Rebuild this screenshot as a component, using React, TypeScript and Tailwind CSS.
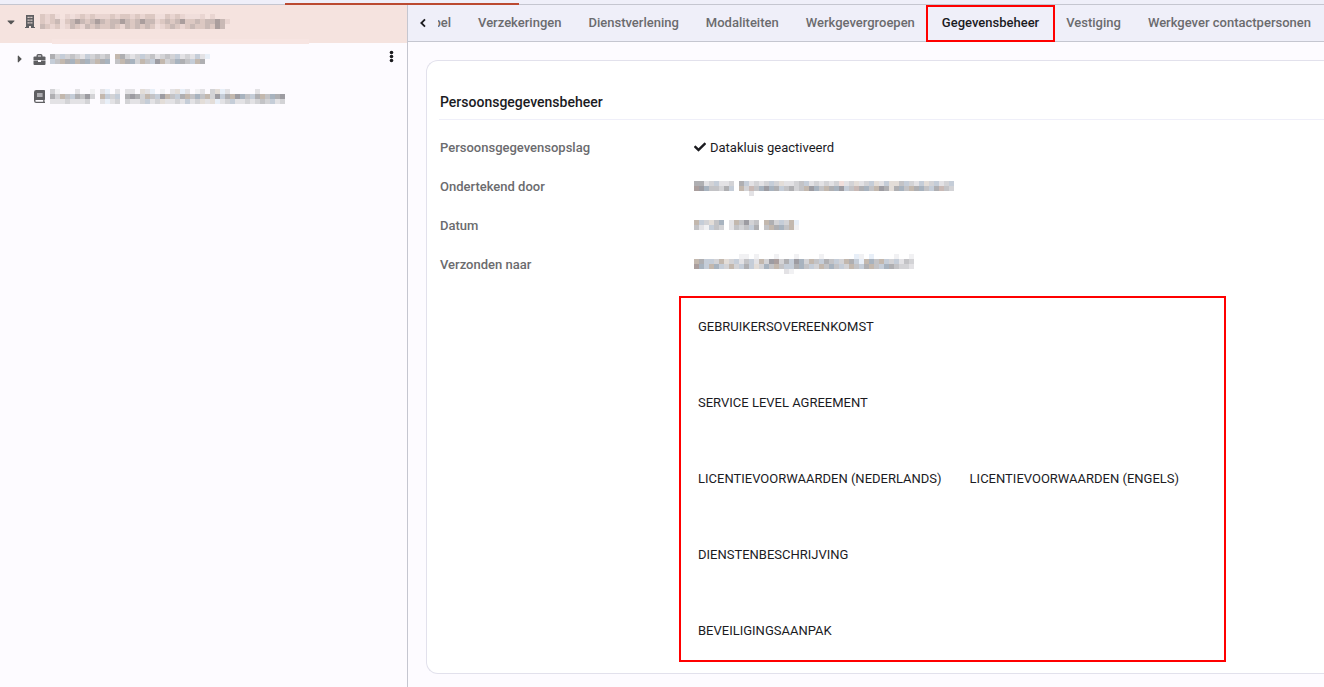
import type { ReactNode } from "react";
import { FaCaretDown, FaCaretRight, FaCheck } from "react-icons/fa";

// Shades for the masked text blocks
const shades: Record<string, string> = {
  "0": "#f1f1f3",
  "1": "#e3e2e5",
  "2": "#d3d3d6",
  "3": "#c3c3c6",
  "4": "#afafb2",
  "5": "#9d9ca2",
  w: "#c3b8ae",
  v: "#e3ddd8",
  c: "#a8b3bf",
  d: "#c5cdd8",
  b: "#e8eff8",
  p: "#f0dedb",
  t: "#e9d5d1",
  q: "#dcc8c2",
  r: "#c9b9b5",
  s: "#aa9e9d",
};

const BLOCK = 5;

// Masked value, drawn as a mosaic of square blocks
const Masked = ({ rows, label }: { rows: string[]; label: string }) => {
  const width = Math.max(...rows.map((row) => row.length)) * BLOCK;
  return (
    <svg
      width={width}
      height={rows.length * BLOCK}
      shapeRendering="crispEdges"
      role="img"
      aria-label={label}
      className="shrink-0"
    >
      {rows.map((row, y) =>
        row.split("").map((cell, x) =>
          shades[cell] ? (
            <rect
              key={`${x}-${y}`}
              x={x * BLOCK}
              y={y * BLOCK}
              width={BLOCK}
              height={BLOCK}
              fill={shades[cell]}
            />
          ) : null
        )
      )}
    </svg>
  );
};

const BuildingIcon = () => (
  <svg width="11" height="13" viewBox="0 0 11 13" className="mr-1 shrink-0 text-[#5f5f62]" aria-hidden="true">
    <path
      fill="currentColor"
      fillRule="evenodd"
      d="M1 0h8v12h1v1H6V11H4v2H0v-1h1zM2.6 1.8v1.2h1.2V1.8zm1.8 0v1.2h1.2V1.8zm1.8 0v1.2h1.2V1.8zM2.6 4.5v1.2h1.2V4.5zm1.8 0v1.2h1.2V4.5zm1.8 0v1.2h1.2V4.5zM2.6 7.2v1.2h1.2V7.2zm1.8 0v1.2h1.2V7.2zm1.8 0v1.2h1.2V7.2z"
    />
  </svg>
);

const BriefcaseIcon = () => (
  <svg width="13" height="11" viewBox="0 0 13 11" className="mr-1 shrink-0 text-[#5f5f62]" aria-hidden="true">
    <path d="M4.2 3V1.6q0-.9.9-.9h2.8q.9 0 .9.9V3" fill="none" stroke="currentColor" strokeWidth="1.4" />
    <path fill="currentColor" d="M1.6 2.5h9.8q1.1 0 1.1 1.1V6H.5V3.6q0-1.1 1.1-1.1z" />
    <path
      fill="currentColor"
      d="M.5 6.6H5v1.3h3V6.6h4.5V10q0 1-1 1h-10q-1 0-1-1z"
    />
  </svg>
);

const BookIcon = () => (
  <svg width="11" height="13" viewBox="0 0 11 13" className="mr-[5px] shrink-0 text-[#5f5f62]" aria-hidden="true">
    <path
      fill="currentColor"
      fillRule="evenodd"
      d="M2.2 0h8q.8 0 .8.8v8.4q0 .5-.5.8v1.7h.5V13H2.2Q0 13 0 10.8V2.2Q0 0 2.2 0zM3 3.6v1h5.6v-1zm0 2v.8h5.6v-.8zM2.2 10q-.9 0-.9.8t.9.9h7V10z"
    />
  </svg>
);

const MoreIcon = () => (
  <svg width="5" height="13" viewBox="0 0 5 13" fill="currentColor" aria-hidden="true">
    <circle cx="2.5" cy="2.5" r="1.8" />
    <circle cx="2.5" cy="6.5" r="1.8" />
    <circle cx="2.5" cy="10.5" r="1.8" />
  </svg>
);

const ChevronIcon = () => (
  <svg width="8" height="10" viewBox="0 0 8 10" fill="none" aria-hidden="true">
    <path d="M6 1.3 2.3 5 6 8.7" stroke="currentColor" strokeWidth="1.8" />
  </svg>
);

const tabs = [
  "bel",
  "Verzekeringen",
  "Dienstverlening",
  "Modaliteiten",
  "Werkgevergroepen",
  "Gegevensbeheer",
  "Vestiging",
  "Werkgever contactpersonen",
];

const documents = [
  ["Gebruikersovereenkomst"],
  ["Service Level Agreement"],
  ["Licentievoorwaarden (Nederlands)", "Licentievoorwaarden (Engels)"],
  ["Dienstenbeschrijving"],
  ["Beveiligingsaanpak"],
];

const Sidebar = () => (
  <aside className="w-[408px] shrink-0 border-r border-[#c5c6d0]">
    <ul>
      <li className="flex h-[38px] items-center bg-[#f5e3df] pb-[5px] pl-[5px]">
        <button aria-label="Inklappen" className="flex w-5 text-[#555]">
          <FaCaretDown size={12} />
        </button>
        <BuildingIcon />
        <Masked
          label="Werkgever"
          rows={[
            "qtqp tptqtqtttqtqqtqtqqppqtqtpppt t   ",
            "qtqrpqrsrqrsrqrrsrqrsrrtqrqrsqqrqrrsrt",
            "rqtqptrqtrqrqqrqtrqrqrqptqrqtqrqqrqsr ",
          ]}
        />
      </li>
      <li className="relative flex h-[37px] items-center pb-[5px] pl-[14px]">
        <span className="absolute -top-1 left-[52px] h-[5px] w-[257px] bg-[#f7e5e2]" />
        <button aria-label="Uitklappen" className="flex w-[19px] text-[#555]">
          <FaCaretRight size={12} />
        </button>
        <BriefcaseIcon />
        <Masked
          label="Afdeling"
          rows={["42d2321d2323 w4212d231232d121d1b", "d3w4cw4c3w4c 3w4c2w3d5w23c43dw4 "]}
        />
        <button aria-label="Meer opties" className="mr-[13px] ml-auto pb-1.5 text-[#1b1b1f]">
          <MoreIcon />
        </button>
      </li>
      <li className="flex h-[37px] items-center pb-[5px] pl-[34px]">
        <BookIcon />
        <Masked
          label="Dossier"
          rows={[
            "20   1  0 1b 1 11 v1b 0 1vb1 01 2vb1     1     ",
            "42w3d4352 wd2d 4542w3d5w3d4w3c3w25d4w5c3d4w3c45",
            "11121112  1b12 2112d12v1121d12v1vb12d1121232d12",
          ]}
        />
      </li>
    </ul>
  </aside>
);

const TabBar = () => (
  <div className="flex h-[37px] border-b border-[#c5c6d0] bg-[#efeff9]">
    <button
      aria-label="Vorige"
      className="flex w-[30px] shrink-0 items-center justify-center text-[#1b1b1f]"
    >
      <ChevronIcon />
    </button>
    <nav className="-mb-px flex min-w-0 flex-1 justify-end gap-px overflow-hidden">
      {tabs.map((tab) => {
        const active = tab === "Gegevensbeheer";
        return (
          <button
            key={tab}
            className={`relative shrink-0 px-[13px] pb-0.5 font-medium whitespace-nowrap ${
              active ? "text-[#1b1b1f]" : "text-[#6b6b6e]"
            }`}
          >
            {tab}
            {active && <span className="absolute -inset-x-[3px] inset-y-0 border-2 border-[#ff0000]" />}
          </button>
        );
      })}
    </nav>
  </div>
);

const Row = ({ label, children }: { label: string; children: ReactNode }) => (
  <div className="flex items-start py-[9px] leading-[21px]">
    <dt className="w-[254px] shrink-0 font-medium text-[#6b6b6e]">{label}</dt>
    <dd className="flex h-[21px] items-start">{children}</dd>
  </div>
);

const App = () => {
  return (
    <div className="flex min-h-screen flex-col bg-[#fdfbff] font-[Roboto,sans-serif] text-[13px] text-[#1b1b1f]">
      <div className="flex h-[5px] items-end border-b border-[#c5c6d0] bg-[#efeff9]">
        <span className="-mb-px ml-[285px] h-[2px] w-[234px] bg-[#bb4a31]" />
      </div>

      <div className="flex flex-1">
        <Sidebar />
        <main className="flex min-w-0 flex-1 flex-col">
          <TabBar />
          <section className="mt-[18px] mb-[13px] ml-[18px] flex-1 rounded-l-xl border border-r-0 border-[#e2e1ec] bg-white pl-3">
            <h2 className="border-b border-[#efeff9] pt-[31px] pb-[7px] pl-px text-sm font-medium">
              Persoonsgegevensbeheer
            </h2>

            <dl className="pt-2 pl-px">
              <Row label="Persoonsgegevensopslag">
                <FaCheck size={12} className="mt-1 mr-1" />
                Datakluis geactiveerd
              </Row>
              <Row label="Ondertekend door">
                <Masked
                  label="Naam"
                  rows={[
                    "",
                    "4412d112 4d1212d2v1123d121212p12v12dv1dvv3d21dv2d12d",
                    "s5c3324d w2r3c5c4d3423w5c3w4c5d3r4c3w54v4c3w4c3d4r32",
                    "           1",
                  ]}
                />
              </Row>
              <Row label="Datum">
                <Masked label="Datum" rows={["", "wd2v3c 1w3523 w42d2wb", "310d32 1323d4 3w4c3w0"]} />
              </Row>
              <Row label="Verzonden naar">
                <Masked
                  label="E-mailadres"
                  rows={[
                    "         00 0   0   0    0      b0 b    0  0",
                    "w4dd2wv2d13d1w25s24d5c2w3d43d2w4dbwc3wd2d132",
                    "scdwcd2w2d4dv2c3w3dd4c3d2w3c3d2w3d4w3dc43221",
                    "                  10",
                  ]}
                />
              </Row>
            </dl>

            <div className="mt-3 ml-[240px] flex w-[547px] max-w-full flex-col gap-10 border-2 border-[#ff0000] py-[11px] pl-[5px]">
              {documents.map((group) => (
                <div key={group[0]} className="flex gap-1">
                  {group.map((name) => (
                    <button key={name} className="h-9 px-3 whitespace-nowrap uppercase">
                      {name}
                    </button>
                  ))}
                </div>
              ))}
            </div>
          </section>
        </main>
      </div>
    </div>
  );
};

export default App;
